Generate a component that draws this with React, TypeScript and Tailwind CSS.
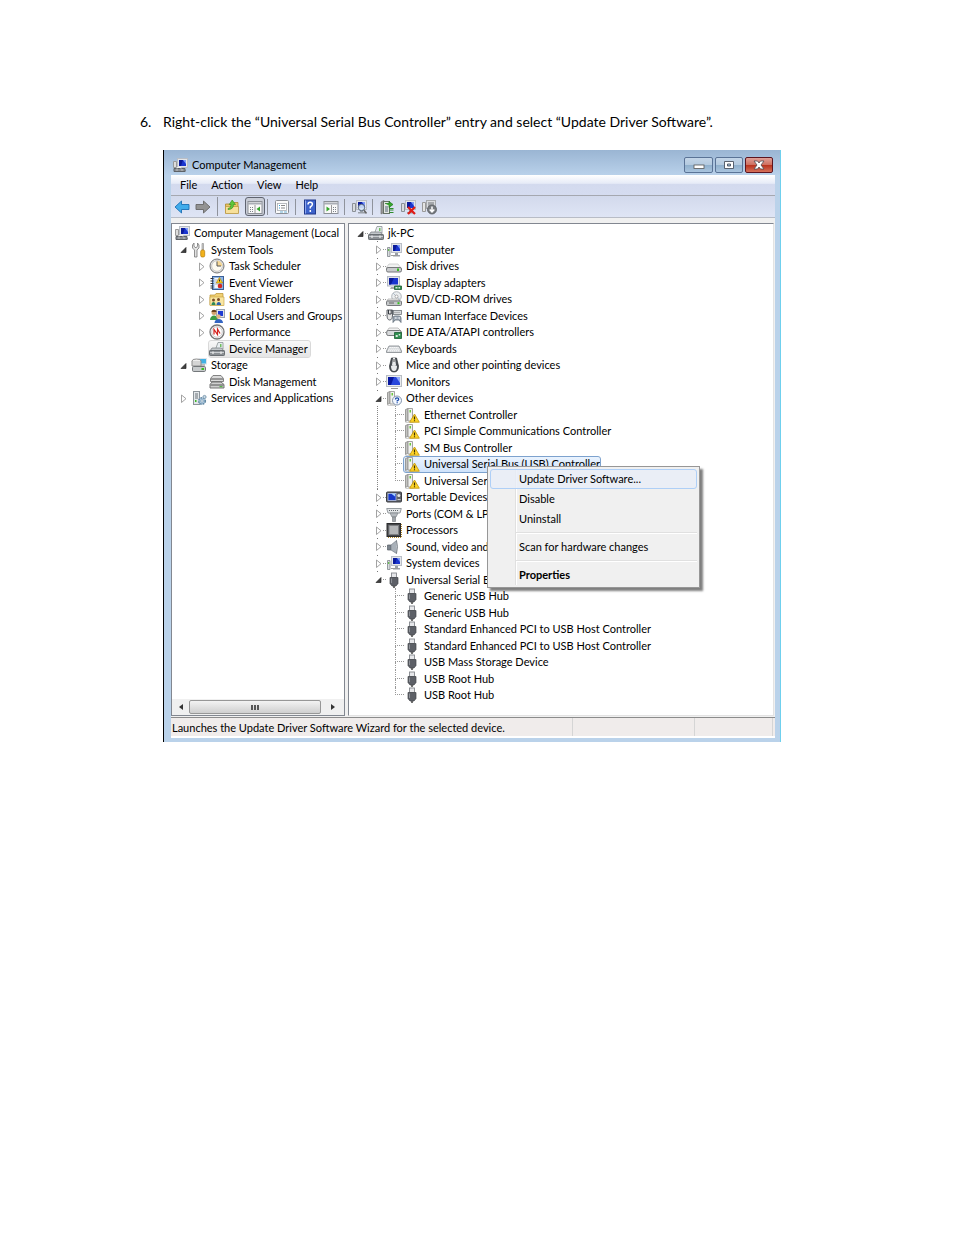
import { Fragment, ReactNode } from "react";

type Row = {
  label: string;
  icon: string;
  level: number;
  open?: boolean;
  leaf?: boolean;
  selected?: boolean;
  last?: boolean;
};

const consoleTree: Row[] = [
  { label: "Computer Management (Local", icon: "mgmt", level: 0, leaf: true },
  { label: "System Tools", icon: "tools", level: 1, open: true },
  { label: "Task Scheduler", icon: "clock", level: 2 },
  { label: "Event Viewer", icon: "event", level: 2 },
  { label: "Shared Folders", icon: "shared", level: 2 },
  { label: "Local Users and Groups", icon: "users", level: 2 },
  { label: "Performance", icon: "perf", level: 2 },
  { label: "Device Manager", icon: "device", level: 2, leaf: true, selected: true },
  { label: "Storage", icon: "storage", level: 1, open: true },
  { label: "Disk Management", icon: "disks", level: 2, leaf: true },
  { label: "Services and Applications", icon: "services", level: 1 },
];

const deviceTree: Row[] = [
  { label: "jk-PC", icon: "device", level: 0, open: true },
  { label: "Computer", icon: "computer", level: 1 },
  { label: "Disk drives", icon: "drive", level: 1 },
  { label: "Display adapters", icon: "display", level: 1 },
  { label: "DVD/CD-ROM drives", icon: "dvd", level: 1 },
  { label: "Human Interface Devices", icon: "hid", level: 1 },
  { label: "IDE ATA/ATAPI controllers", icon: "ide", level: 1 },
  { label: "Keyboards", icon: "keyboard", level: 1 },
  { label: "Mice and other pointing devices", icon: "mouse", level: 1 },
  { label: "Monitors", icon: "monitor", level: 1 },
  { label: "Other devices", icon: "other", level: 1, open: true },
  { label: "Ethernet Controller", icon: "warn", level: 2 },
  { label: "PCI Simple Communications Controller", icon: "warn", level: 2 },
  { label: "SM Bus Controller", icon: "warn", level: 2 },
  { label: "Universal Serial Bus (USB) Controller", icon: "warn", level: 2, selected: true },
  { label: "Universal Serial", icon: "warn", level: 2, last: true },
  { label: "Portable Devices", icon: "portable", level: 1 },
  { label: "Ports (COM & LPT)", icon: "port", level: 1 },
  { label: "Processors", icon: "cpu", level: 1 },
  { label: "Sound, video and", icon: "sound", level: 1 },
  { label: "System devices", icon: "computer", level: 1 },
  { label: "Universal Serial Bus", icon: "usb", level: 1, open: true },
  { label: "Generic USB Hub", icon: "usb", level: 2 },
  { label: "Generic USB Hub", icon: "usb", level: 2 },
  { label: "Standard Enhanced PCI to USB Host Controller", icon: "usb", level: 2 },
  { label: "Standard Enhanced PCI to USB Host Controller", icon: "usb", level: 2 },
  { label: "USB Mass Storage Device", icon: "usb", level: 2 },
  { label: "USB Root Hub", icon: "usb", level: 2 },
  { label: "USB Root Hub", icon: "usb", level: 2, last: true },
];

// Shared pieces of the 16x16 icons
const screen = (
  <>
    <rect x="5.500" y="1.500" width="10" height="9" fill="#e4e6ea" stroke="#b9bec6" />
    <rect x="7" y="3" width="7" height="6" fill="#1a35cf" />
    <path d="M7 3h4L9 9H7z" fill="#0a1a9a" />
    <path d="M11 3h3v4z" fill="#7f9cf5" />
    <path d="M9 11h3v2h2v1.500H7V13h2z" fill="#9aa0a8" />
  </>
);

const tower = (
  <>
    <path d="M1.500 2.500L4 1.500v11.500l-2.500 1.500z" fill="#c4c4c2" stroke="#8a8a88" strokeWidth=".8" />
    <path d="M4 1.500h4.500V14H4z" fill="#f1f1ef" stroke="#9a9a97" strokeWidth=".9" />
    <rect x="5.500" y="3" width="1.500" height="2.500" fill="#6cc93c" />
    <path d="M1.500 15.300h8" stroke="#b5b5b5" strokeWidth=".8" />
  </>
);

const driveBox = (
  <>
    <path d="M3 6h9l3 4H0z" fill="#f1f2f2" stroke="#b8b8b8" strokeWidth=".6" />
    <rect x=".5" y="9.500" width="15" height="4.500" rx="1.500" fill="#c9cbcd" stroke="#77797c" />
    <rect x="11" y="10.500" width="2" height="2.500" fill="#37bd21" />
  </>
);

const icons: Record<string, ReactNode> = {
  mgmt: (
    <>
      {screen}
      <path d="M1.500 4.500h3v6h-3z" fill="#ddd" stroke="#999" />
      <path d="M2 11.500h11v3H2z" fill="#8b8f94" stroke="#5d6166" />
      <path d="M5 11.500v-1h4v1M4.500 13h1M9.500 13h1" stroke="#eee" fill="none" />
    </>
  ),
  tools: (
    <>
      <path d="M3 1v3l1 1.500h1.500L6.500 4V1L8 3v3L6 8v7H3.500V8L1.500 6V3z" fill="#e2e2e2" stroke="#777" strokeWidth=".8" />
      <path d="M11 1.500h1.500V8H11z" fill="#ccc" stroke="#888" strokeWidth=".6" />
      <rect x="9.700" y="8" width="4" height="7" rx="1.500" fill="#f2b21b" stroke="#b37a07" strokeWidth=".7" />
    </>
  ),
  clock: (
    <>
      <circle cx="8" cy="8" r="7" fill="#e2e2e2" stroke="#777" />
      <circle cx="8" cy="8" r="5.300" fill="#fdfaf0" stroke="#bbb" strokeWidth=".7" />
      <path d="M8 8V2.700A5.300 5.300 0 0 1 13.300 8z" fill="#f7d894" />
      <path d="M8 3.500V8h4" stroke="#555" fill="none" />
    </>
  ),
  event: (
    <>
      <rect x="3.500" y="1.500" width="11" height="13" fill="#8fb6e6" stroke="#3b5f96" />
      <rect x="5.500" y="3" width="4" height="10" fill="#f4f7fb" />
      <path d="M6 5h3M6 7h3M6 9h3" stroke="#99a" strokeWidth=".7" />
      <path d="M10.500 2.500l3.200 5.500H7.300z" fill="#ffd21f" stroke="#a77c00" strokeWidth=".6" />
      <path d="M10.500 4.500v2" stroke="#222" />
      <circle cx="11" cy="11" r="2.300" fill="#d52a22" />
      <path d="M1.500 3.500h3M1.500 6h3M1.500 8.500h3M1.500 11h3M1.500 13h3" stroke="#333" />
    </>
  ),
  shared: (
    <>
      <path d="M1 4h5l1-1.500h7V14H1z" fill="#f0cf72" stroke="#b8912e" strokeWidth=".7" />
      <path d="M1 6h14v8.500H1z" fill="#f9e6a2" stroke="#c29d3d" strokeWidth=".6" />
      <circle cx="4.500" cy="9" r="1.500" fill="#7a4b26" />
      <circle cx="9.500" cy="8.500" r="1.500" fill="#7a4b26" />
      <path d="M2.500 14c0-4 4-4 4 0z" fill="#2f8a54" />
      <path d="M7.500 14c0-4 4.500-4 4.500 0z" fill="#2c62ad" />
    </>
  ),
  users: (
    <>
      <rect x="7.500" y="1.500" width="8" height="8" fill="#dfe3ea" stroke="#9aa2af" />
      <rect x="9" y="3" width="5" height="5" fill="#1e3bd2" />
      <circle cx="5" cy="4.500" r="2.500" fill="#d5a36d" />
      <path d="M2.500 4c0-3 5-3 5 0z" fill="#69421e" />
      <path d="M1 12c0-6 8-6 8 0z" fill="#3e9b45" />
      <circle cx="9.500" cy="8.500" r="2.200" fill="#e2b584" />
      <path d="M5.500 15c0-5.500 8.500-5.500 8.500 0z" fill="#3465c2" />
    </>
  ),
  perf: (
    <>
      <circle cx="8" cy="8" r="7" fill="#fff" stroke="#777" strokeWidth="1.300" />
      <circle cx="8" cy="8" r="5.300" fill="none" stroke="#ccc" />
      <path d="M5 10.500V5.500l3.500 5V5l2.500 4.500" stroke="#d4221d" strokeWidth="1.200" fill="none" />
    </>
  ),
  device: (
    <>
      <path d="M7 7l2-5.500h5V8H7z" fill="#e9eef0" stroke="#8c9396" strokeWidth=".8" />
      <rect x="11" y="3" width="1.500" height="3" fill="#6fbf5f" />
      <path d="M3 7h9.500l2.500 3H1z" fill="#c3c8cb" stroke="#74797c" strokeWidth=".7" />
      <rect x=".5" y="9.500" width="15" height="5" rx=".7" fill="#8b9094" stroke="#6a6f73" />
      <path d="M1 11.500h14" stroke="#c9cdd0" />
      <path d="M4 10.500v2.500M12 10.500v2.500" stroke="#e9e9e9" strokeWidth="1.300" />
    </>
  ),
  storage: (
    <>
      <rect x="8" y="1.500" width="7.500" height="5.500" fill="#42b1e4" stroke="#dfe4ea" />
      <path d="M10 8h4" stroke="#aaa" strokeWidth="1.500" />
      <ellipse cx="5.500" cy="4" rx="4.500" ry="2" fill="#eee" stroke="#8d8d8d" />
      <path d="M1 4v5h9V4" fill="#d5d5d5" stroke="#8d8d8d" />
      <rect x="1.500" y="9.500" width="13" height="5" rx="1.200" fill="#c7cacc" stroke="#74787b" />
      <rect x="10.500" y="11" width="2.500" height="2" fill="#39bf22" />
    </>
  ),
  disks: (
    <>
      <path d="M4 1.500h8l2.500 3v3h-13v-3z" fill="#dadada" stroke="#777" strokeWidth=".9" />
      <path d="M2 5h12" stroke="#555" />
      <path d="M3 8h9l3 2.500v3.500H1v-3.500z" fill="#cfcfcf" stroke="#666" strokeWidth=".9" />
      <path d="M1.500 11h13" stroke="#555" />
      <path d="M10.500 12.700h3" stroke="#3cae28" />
    </>
  ),
  services: (
    <>
      <rect x="2.500" y="1.500" width="6" height="13" fill="#e3e7ea" stroke="#8c949a" />
      <path d="M4 4h3M4 6h3M4 8h3" stroke="#6a7378" />
      <rect x="4" y="10" width="1.500" height="2" fill="#3eb927" />
      <circle cx="11" cy="11" r="3.300" fill="#a9c6dd" stroke="#6388a3" strokeWidth="1.600" strokeDasharray="1.700 1" />
      <circle cx="11" cy="11" r="1.200" fill="#fff" stroke="#6388a3" strokeWidth=".6" />
      <circle cx="13.500" cy="7" r="1.600" fill="#cbdbe6" stroke="#7393aa" strokeWidth=".9" />
    </>
  ),
  computer: (
    <>
      {screen}
      <path d="M1.500 5.500h2.500v9H1.500z" fill="#d9dcdf" stroke="#8b9096" strokeWidth=".9" />
      <path d="M2.700 7v2" stroke="#4eb82f" />
      <path d="M5 13.500h7" stroke="#999" />
    </>
  ),
  drive: driveBox,
  display: (
    <>
      <rect x="1.500" y="1.500" width="12" height="9.500" fill="#e4e6ea" stroke="#b3b9c3" />
      <rect x="3" y="3" width="9" height="6.500" fill="#1a35cf" />
      <path d="M3 3h5L5 9.500H3z" fill="#0a1a9a" />
      <path d="M5 12h4v2H4z" fill="#aaa" />
      <path d="M8.500 11h7v3.500h-7z" fill="#2f8f50" stroke="#1b5a31" strokeWidth=".8" />
      <path d="M9.500 12h2v1.500h-2zM12.500 12H14v1.500h-1.500z" fill="#d6e3d9" />
    </>
  ),
  dvd: (
    <>
      <circle cx="10.500" cy="5.500" r="4.800" fill="#eceff1" stroke="#9ca2a8" strokeWidth=".8" />
      <path d="M10.500 5.500L7 2M10.500 5.500l3.500 3" stroke="#aebcc8" />
      <circle cx="10.500" cy="5.500" r="1.500" fill="#fff" stroke="#909090" strokeWidth=".7" />
      <path d="M2 8h10l2 2H1z" fill="#eee" stroke="#999" strokeWidth=".6" />
      <rect x=".5" y="10" width="15" height="4.500" rx="1" fill="#c5c8ca" stroke="#77797c" />
      <path d="M3 12h5" stroke="#666" />
      <rect x="11.500" y="11.200" width="2" height="2" fill="#37bd21" />
    </>
  ),
  hid: (
    <>
      <path d="M1 2v5q0 5 2.700 5t2.800-5V2z" fill="#e7e7e7" stroke="#5c6167" />
      <path d="M2.500 2v4h2.700V2" fill="none" stroke="#363b42" />
      <rect x="7.500" y="2.500" width="8" height="4" fill="#d7dadd" stroke="#71767b" strokeWidth=".8" />
      <path d="M8.500 4.500h6" stroke="#888" strokeDasharray="1 1" />
      <path d="M7 14.500V10q0-2 2-2h4q2 0 2 2v4.500l-2-2.500H9z" fill="#a4aeba" stroke="#5d6976" strokeWidth=".8" />
      <path d="M9 10h1.500M12.500 10H14" stroke="#fff" />
    </>
  ),
  ide: (
    <>
      <path d="M3 4h9l3 3H1z" fill="#f2f2f2" stroke="#999" strokeWidth=".6" />
      <rect x=".7" y="6.500" width="14.500" height="5" rx="1.500" fill="#d9dbdd" stroke="#77797c" />
      <path d="M8.500 8.500h7v6h-7z" fill="#2f8f50" stroke="#1b5a31" strokeWidth=".8" />
      <path d="M9.700 11h2v2h-2zM12.700 10h1.500v1.500h-1.500z" fill="#dce9de" />
    </>
  ),
  keyboard: (
    <>
      <path d="M3 5h10l2.500 5v1.500H.5V10z" fill="#d3d6d9" stroke="#81868b" strokeWidth=".8" />
      <path d="M3.500 6.500h9M2.500 8.200h11M2 9.800h12" stroke="#fff" strokeDasharray="1.300 .7" />
    </>
  ),
  mouse: (
    <>
      <path d="M5.500 1h5l2 8q0 6-4.500 6t-4.500-6z" fill="#4a4f55" stroke="#2b2f33" strokeWidth=".7" />
      <path d="M7 1h2l1 7H6z" fill="#e8eaec" />
      <path d="M5 9q3-2 6 0 0 5-3 5T5 9z" fill="#e9ebed" />
      <path d="M8 2v3" stroke="#555" />
    </>
  ),
  monitor: (
    <>
      <rect x=".5" y="1.500" width="15" height="11" fill="#e9ebee" stroke="#b8bdc3" />
      <rect x="2" y="3" width="12" height="8" fill="#2947dc" />
      <path d="M2 3h6L5 11H2z" fill="#0818a0" />
      <path d="M10 3h4v6z" fill="#8fa9f7" />
      <path d="M5 14.500h7" stroke="#999" />
    </>
  ),
  other: (
    <>
      {tower}
      <circle cx="11" cy="10.500" r="4.500" fill="#f3f8ff" stroke="#7587a0" strokeWidth=".9" />
      <path d="M9.500 9.500q0-1.700 1.600-1.700t1.600 1.400q0 1-1.500 1.600v.7M11.200 12.300v1" stroke="#1b4cab" strokeWidth="1.300" fill="none" />
    </>
  ),
  warn: (
    <>
      {tower}
      <path d="M10.500 7l4.800 8.200H5.700z" fill="#ffd526" stroke="#c49a14" strokeWidth=".9" strokeLinejoin="round" />
      <path d="M10.500 9.500v3M10.500 13.300v1" stroke="#3a2c00" strokeWidth="1.200" />
    </>
  ),
  portable: (
    <>
      <rect x=".5" y="3" width="15" height="10" rx="1" fill="#5f636b" stroke="#3a3d43" />
      <rect x="2" y="4.500" width="8" height="7" fill="#1839c9" stroke="#c9d2e8" strokeWidth=".7" />
      <path d="M5 4.500h4v3z" fill="#a3d2ff" />
      <circle cx="12.800" cy="6.500" r="1.500" fill="#e6e6e6" />
      <path d="M11.500 10.500h3" stroke="#ccc" />
    </>
  ),
  port: (
    <>
      <path d="M.7 2.500h14.600L14 7H2z" fill="#e3e6e8" stroke="#80868b" strokeWidth=".8" />
      <path d="M3 4.500h10" stroke="#62686d" strokeDasharray="1 1" />
      <path d="M4 7h8l-2 4H6z" fill="#b5babf" stroke="#7b8186" strokeWidth=".7" />
      <path d="M6.500 11h3v4.500h-3z" fill="#a0a5aa" stroke="#74797e" strokeWidth=".6" />
    </>
  ),
  cpu: (
    <>
      <path d="M2 15.500h14M15.500 2v13" stroke="#b48a2a" strokeDasharray="1 1" />
      <rect x="1" y="1.500" width="13.500" height="13" fill="#46484b" stroke="#2a2b2d" />
      <rect x="3" y="3.500" width="9.500" height="9" fill="#b4b6b8" stroke="#7d7f82" />
    </>
  ),
  sound: (
    <>
      <path d="M1.500 6H5v5H1.500z" fill="#7c848c" stroke="#565d65" strokeWidth=".7" />
      <path d="M5 6l5.500-4.500v13L5 11z" fill="#a9b1b9" stroke="#767e86" strokeWidth=".7" />
      <path d="M10.500 1.500q2 6 0 13" fill="#e6eaed" stroke="#6a727a" strokeWidth=".8" />
    </>
  ),
  usb: (
    <>
      <rect x="5.500" y="1" width="5" height="4.500" fill="#e6e7ea" stroke="#85888e" strokeWidth=".9" />
      <path d="M4 5.500h8v6l-2 2.500H6l-2-2.500z" fill="#5d6067" stroke="#45474c" strokeWidth=".7" />
      <path d="M5.500 6.500v4.500" stroke="#8f9299" />
      <path d="M8 14v2" stroke="#444" strokeWidth="1.500" />
    </>
  ),
  back: (
    <path d="M1 8l6.500-6v3.500H15v5H7.500V14z" fill="#41aceb" stroke="#1c6fb4" strokeWidth=".9" />
  ),
  forward: (
    <path d="M15 8L8.500 2v3.500H1v5h7.500V14z" fill="#939393" stroke="#666" strokeWidth=".9" />
  ),
  up: (
    <>
      <path d="M1.500 5h5l1-1.500H14V14H1.500z" fill="#e9c765" stroke="#a98530" strokeWidth=".8" />
      <path d="M1.500 7.500h13V14.500h-13z" fill="#f7e09a" stroke="#b8943c" strokeWidth=".7" />
      <path d="M4 9.500q3 0 3-4H5.200L8.200 1l3.300 4.500h-2q0 5-5.500 5z" fill="#5ec83b" stroke="#2f8b1b" strokeWidth=".6" />
    </>
  ),
  treeToggle: (
    <>
      <rect x="1" y="2.500" width="14" height="12" fill="#f9f9f9" stroke="#8b8f96" />
      <path d="M1 4.500h14" stroke="#a9adb5" strokeWidth="2" />
      <path d="M3 8.500h4M3 10.500h4M3 12.500h4" stroke="#7d838b" strokeDasharray="1 1" />
      <path d="M8 6v8" stroke="#999" />
      <path d="M13 7.500v5L9.500 10z" fill="#33a62b" />
    </>
  ),
  props: (
    <>
      <rect x="1.500" y="1.500" width="13" height="13" rx="1" fill="#fafafa" stroke="#8b8f96" />
      <rect x="3.500" y="4.500" width="9" height="7" fill="#fff" stroke="#a7abb1" strokeWidth=".8" />
      <path d="M5 6.500h1M5 9h1" stroke="#279bd6" />
      <path d="M7 6.500h4M7 9h4" stroke="#888" />
      <path d="M6 13h3M10 13h3" stroke="#6ab1d8" />
    </>
  ),
  help: (
    <>
      <rect x="2.500" y="1" width="11" height="14" fill="#3d63cb" stroke="#20398b" />
      <path d="M3.500 1.500v13" stroke="#8ea7ee" />
      <path d="M6 5.500q0-2.200 2.200-2.200t2.200 2q0 1.400-2.100 2.700v1.500M8.300 11v2" stroke="#fff" strokeWidth="1.500" fill="none" />
    </>
  ),
  actionPane: (
    <>
      <rect x="1" y="2.500" width="14" height="12" fill="#f9f9f9" stroke="#8b8f96" />
      <path d="M1 4.500h14" stroke="#a9adb5" strokeWidth="2" />
      <path d="M10 8.500h4M10 10.500h4M10 12.500h4" stroke="#7d838b" strokeDasharray="1 1" />
      <path d="M8.500 6v8" stroke="#999" />
      <path d="M3.500 7.500v5L7 10z" fill="#33a62b" />
    </>
  ),
  scan: (
    <>
      {screen}
      <path d="M1.500 4.500h3v8h-3z" fill="#d9dcdf" stroke="#8b9096" />
      <circle cx="10.500" cy="8.500" r="3.200" fill="#d5e6f7" fillOpacity=".9" stroke="#5c6b7c" />
      <path d="M12.800 11l2.700 3.500" stroke="#666" strokeWidth="1.600" />
    </>
  ),
  update: (
    <>
      <path d="M2 3l3-1.500v12L2 15z" fill="#999" stroke="#666" strokeWidth=".6" />
      <rect x="4.500" y="2.500" width="6" height="12" fill="#e3e6e3" stroke="#667066" />
      <path d="M6 8h3M6 10h3M6 12h3" stroke="#567" />
      <path d="M6 4.500h4V2.500l4 3-4 3V6.500" fill="#38a82d" stroke="#187518" strokeWidth=".7" />
      <path d="M10.500 11h4M10.500 13.500h4M10.500 9.500h4" stroke="#2d8b2c" />
    </>
  ),
  remove: (
    <>
      {screen}
      <path d="M1.500 4.500h3v8h-3z" fill="#d9dcdf" stroke="#8b9096" />
      <path d="M8 8l7 7M15 8l-7 7" stroke="#e01b17" strokeWidth="2.200" />
    </>
  ),
  disable: (
    <>
      <rect x="5.500" y="1.500" width="9" height="8" fill="#dadcdf" stroke="#a5a8ac" />
      <rect x="7" y="3" width="6" height="5" fill="#a4a7ab" />
      <path d="M1.500 3.500h3v9h-3z" fill="#e5e5e5" stroke="#999" />
      <circle cx="11" cy="10.500" r="4.500" fill="#777b80" stroke="#55585c" strokeWidth=".8" />
      <path d="M11 7.500v5M8.700 10.500L11 13l2.300-2.500" stroke="#fff" strokeWidth="1.500" fill="none" />
    </>
  ),
};

const toolbar = [
  ["back", "forward"],
  ["up", "treeToggle"],
  ["props"],
  ["help", "actionPane"],
  ["scan"],
  ["update", "remove", "disable"],
];

const titles: Record<string, string> = {
  back: "Back",
  forward: "Forward",
  up: "Up one level",
  treeToggle: "Show/hide console tree",
  props: "Properties",
  help: "Help",
  actionPane: "Show/hide action pane",
  scan: "Scan for hardware changes",
  update: "Update driver software",
  remove: "Uninstall",
  disable: "Disable",
};

function Icon({ name }: { name: string }) {
  return (
    <svg viewBox="0 0 16 16" className="size-4 shrink-0" aria-hidden="true">
      {icons[name]}
    </svg>
  );
}

function Expander({ open }: { open?: boolean }) {
  return (
    <svg viewBox="0 0 9 9" className="size-[9px] shrink-0" aria-hidden="true">
      {open ? (
        <path d="M7 2.500v5H2z" fill="#404040" stroke="#222" strokeWidth=".7" />
      ) : (
        <path d="M2.500 1l4.500 3.700-4.500 3.800z" fill="#fff" stroke="#999" strokeWidth=".9" />
      )}
    </svg>
  );
}

function ConsoleRow({ row }: { row: Row }) {
  const indent = ["pl-[2px]", "pl-[7px]", "pl-[25px]"][row.level];

  return (
    <li className={`flex h-4 items-center whitespace-nowrap even:h-[17px] ${indent}`}>
      {row.level > 0 && (
        <span className="flex w-3 shrink-0">
          {!row.leaf && <Expander open={row.open} />}
        </span>
      )}
      <span
        className={`flex h-4 items-center gap-1 ${
          row.selected
            ? "rounded-[2px] bg-gradient-to-b from-[#f8f8f8] to-[#e5e5e5] pr-[2px] outline outline-[#d9d9d9]"
            : ""
        }`}
      >
        <Icon name={row.icon} />
        {row.label}
      </span>
    </li>
  );
}

function ContextMenu() {
  const groups = [
    ["Update Driver Software...", "Disable", "Uninstall"],
    ["Scan for hardware changes"],
    ["Properties"],
  ];

  return (
    <div
      role="menu"
      className="absolute top-[10px] left-[137px] z-10 w-[213px] border border-[#979797] bg-[#f0f0f0] p-[2px] shadow-[3px_3px_2px_rgba(0,0,0,0.5)]"
    >
      <div className="bg-[linear-gradient(to_right,transparent_25px,#e0e0e0_25px,#e0e0e0_26px,#fff_26px,#fff_27px,transparent_27px)]">
        {groups.map((group, i) => (
          <Fragment key={i}>
            {i > 0 && (
              <div className="flex h-2 items-center pl-[26px]">
                <hr className="h-[2px] w-full border-t border-b border-t-[#e0e0e0] border-b-white" />
              </div>
            )}
            {group.map((item) => (
              <button
                key={item}
                role="menuitem"
                className={`flex h-5 w-full items-center rounded-[3px] border pl-[28px] text-left ${
                  item.startsWith("Update")
                    ? "border-[#aecff7] bg-[#e8eef7]/80"
                    : "border-transparent"
                } ${item === "Properties" ? "font-bold" : ""}`}
              >
                {item}
              </button>
            ))}
          </Fragment>
        ))}
      </div>
    </div>
  );
}

function DeviceRow({ row }: { row: Row }) {
  return (
    <li className="relative flex h-4 items-center whitespace-nowrap even:h-[17px]">
      {row.level < 2 && (
        <>
          <span className={`shrink-0 ${row.level ? "w-6" : "w-[6px]"}`} />
          <span
            className={`flex h-full shrink-0 items-center ${
              row.level
                ? "bg-[linear-gradient(#777,#777)] bg-[length:1px_1px] bg-[position:3px_0] bg-no-repeat"
                : ""
            }`}
          >
            <Expander open={row.open} />
          </span>
          <span className="w-[3px] shrink-0 border-t border-dotted border-[#999]" />
        </>
      )}
      {row.level === 2 && (
        <>
          <span className="w-[27px] shrink-0" />
          <span
            className={`h-full w-[18px] shrink-0 ${
              row.icon === "warn" ? "border-l border-dotted border-[#888]" : ""
            }`}
          />
          <span className="flex h-full w-[9px] shrink-0 flex-col">
            <span className="h-1/2 border-b border-l border-dotted border-[#999]" />
            {!row.last && <span className="h-1/2 border-l border-dotted border-[#999]" />}
          </span>
        </>
      )}
      <span
        className={`flex h-[15px] items-center gap-1 ${
          row.selected
            ? "rounded-[2px] bg-gradient-to-b from-[#eaf3fe] to-[#cfe3fb] outline outline-[#7da2ce]"
            : ""
        }`}
      >
        <Icon name={row.icon} />
        {row.label}
      </span>
      {row.selected && <ContextMenu />}
    </li>
  );
}

function CaptionButtons() {
  const blue =
    "border-[#5a7396] bg-[linear-gradient(#c3d5e8,#b4cadf_48%,#8fafcc_50%,#a9c4de)]";

  return (
    <div className="flex gap-[2px]">
      <button aria-label="Minimize" className={`flex h-4 w-[29px] items-center justify-center rounded-[2px] border ${blue}`}>
        <svg viewBox="0 0 12 10" className="h-[10px] w-3">
          <rect x="1" y="5" width="10" height="3.500" fill="#fff" stroke="#555" strokeWidth=".8" />
        </svg>
      </button>
      <button aria-label="Maximize" className={`flex h-4 w-7 items-center justify-center rounded-[2px] border ${blue}`}>
        <svg viewBox="0 0 12 10" className="h-[10px] w-3">
          <path d="M1.500 1.500h9v7h-9zM4.500 4v2h3V4z" fill="#fff" fillRule="evenodd" stroke="#4b5260" strokeWidth=".9" />
        </svg>
      </button>
      <button
        aria-label="Close"
        className="flex h-4 w-7 items-center justify-center rounded-[2px] border border-[#5c1420] bg-[linear-gradient(#e0a098,#cf6f60_48%,#b8301b_50%,#d5705a)]"
      >
        <svg viewBox="0 0 12 10" className="h-[10px] w-3">
          <path d="M1 1h3.500L6 3l1.500-2H11L8 5l3 4H7.500L6 7 4.500 9H1l3-4z" fill="#fff" stroke="#4f4a50" strokeWidth=".8" />
        </svg>
      </button>
    </div>
  );
}

function ManagementWindow() {
  return (
    <section className="border-r border-l border-l-black border-r-[#6fd0ee] bg-[#bad2ea] pr-[5px] pb-1 pl-[7px] text-[11px] leading-4 text-black">
      <header className="-mr-[5px] -ml-[7px] flex h-[25px] items-center gap-1 bg-gradient-to-b from-[#9ab5d3] to-[#b9d1ea] pt-1 pr-[7px] pl-2">
        <Icon name="mgmt" />
        <h1 className="flex-1">Computer Management</h1>
        <CaptionButtons />
      </header>

      <nav className="flex h-[21px] items-center gap-[14px] border-b border-[#a5a8b0] bg-[linear-gradient(#fff,#e6ebf7_42%,#d3daee_45%,#d5dcf0)] pl-[9px]">
        {["File", "Action", "View", "Help"].map((item) => (
          <button key={item}>{item}</button>
        ))}
      </nav>

      <div className="flex h-[22px] items-center border-b border-[#b8bcc6] bg-gradient-to-b from-[#d2d9ec] to-[#dfe5f5] pl-[3px]">
        {toolbar.map((group, i) => (
          <div
            key={i}
            className={`flex items-center gap-[5px] ${
              i > 0 ? "border-l border-[#8f939c] pl-[6px]" : ""
            } ${i > 2 ? "ml-[5px]" : i > 0 ? "ml-[6px]" : ""}`}
          >
            {group.map((name) => (
              <button
                key={name}
                aria-label={titles[name]}
                className={
                  name === "treeToggle"
                    ? "-mr-1 flex h-[19px] w-5 items-center justify-center rounded-[3px] border border-[#5f6470] bg-[#c8ccd6]"
                    : ""
                }
              >
                <Icon name={name} />
              </button>
            ))}
          </div>
        ))}
      </div>

      <main className="flex gap-[3px] bg-[#f0f0f0] pt-[5px] pr-px pb-px">
        <div className="flex w-[174px] shrink-0 flex-col overflow-hidden border border-[#828790] bg-white">
          <ul className="flex-1 pt-px">
            {consoleTree.map((row) => (
              <ConsoleRow key={row.label} row={row} />
            ))}
          </ul>
          <div className="flex h-4 items-center bg-[#f0f0f0]">
            <button aria-label="Scroll left" className="flex w-[17px] justify-center">
              <svg viewBox="0 0 6 8" className="h-2 w-[6px]">
                <path d="M5 1v6L1 4z" fill="#333" />
              </svg>
            </button>
            <div className="flex h-[14px] w-[132px] items-center justify-center rounded-[2px] border border-[#979797] bg-gradient-to-b from-[#f3f3f3] to-[#cfcfcf]">
              <span className="h-[5px] w-2 bg-[repeating-linear-gradient(to_right,#555_0,#555_2px,transparent_2px,transparent_3px)]" />
            </div>
            <button aria-label="Scroll right" className="flex flex-1 justify-center">
              <svg viewBox="0 0 6 8" className="h-2 w-[6px]">
                <path d="M1 1v6l4-3z" fill="#333" />
              </svg>
            </button>
          </div>
        </div>

        <div className="min-w-0 flex-1 border border-t-[#828790] border-r-[#e3e3e3] border-b-[#e3e3e3] border-l-[#828790] bg-white pl-px">
          <ul className="pt-px pb-3">
            {deviceTree.map((row, i) => (
              <DeviceRow key={i} row={row} />
            ))}
          </ul>
        </div>
      </main>

      <footer className="flex h-[21px] border-t border-b-2 border-t-[#8c8c8c] border-b-white bg-[#f0eceb] pr-[2px] leading-5">
        <p className="flex-1 border-r border-[#d5d5d5] pl-px whitespace-nowrap">
          Launches the Update Driver Software Wizard for the selected device.
        </p>
        <span className="w-[122px] border-r border-[#d5d5d5]" />
        <span className="w-[78px] border-r border-[#d5d5d5]" />
      </footer>
    </section>
  );
}

export default function App() {
  return (
    <div className="min-h-screen bg-white pt-[112px] pr-[173px] pl-[140px] font-['Lato','Liberation_Sans',sans-serif] text-black">
      <ol start={6}>
        <li className="flex">
          <span className="w-[23px] shrink-0 text-[14px] leading-5">6.</span>
          <div className="min-w-0 flex-1">
            <p className="mb-[18px] text-[14px] leading-5">
              Right-click the “Universal Serial Bus Controller” entry and select “Update Driver Software”.
            </p>
            <ManagementWindow />
          </div>
        </li>
      </ol>
    </div>
  );
}
